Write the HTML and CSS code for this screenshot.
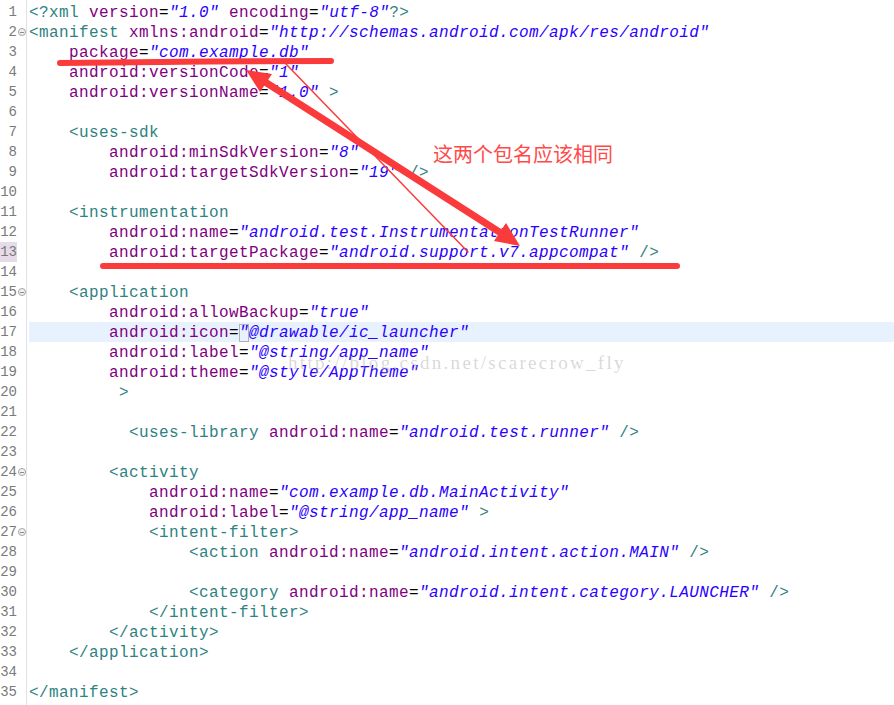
FILE: index.html
```html
<!DOCTYPE html>
<html lang="en">
<head>
    <meta charset="UTF-8">
    <meta name="viewport" content="width=device-width, initial-scale=1.0">
    <title>AndroidManifest.xml</title>
    <link rel="stylesheet" href="styles.css">
</head>
<body>
    <div class="editor">
        <div class="gutter">
            <div class="num">1</div>
            <div class="num fold">2</div>
            <div class="num">3</div>
            <div class="num">4</div>
            <div class="num">5</div>
            <div class="num">6</div>
            <div class="num">7</div>
            <div class="num">8</div>
            <div class="num">9</div>
            <div class="num">10</div>
            <div class="num">11</div>
            <div class="num">12</div>
            <div class="num marked">13</div>
            <div class="num">14</div>
            <div class="num fold">15</div>
            <div class="num">16</div>
            <div class="num">17</div>
            <div class="num">18</div>
            <div class="num">19</div>
            <div class="num">20</div>
            <div class="num">21</div>
            <div class="num">22</div>
            <div class="num">23</div>
            <div class="num fold">24</div>
            <div class="num">25</div>
            <div class="num">26</div>
            <div class="num fold">27</div>
            <div class="num">28</div>
            <div class="num">29</div>
            <div class="num">30</div>
            <div class="num">31</div>
            <div class="num">32</div>
            <div class="num">33</div>
            <div class="num">34</div>
            <div class="num">35</div>
        </div>
        <div class="code">
<div class="ln"><span class="t">&lt;?xml</span> <span class="a">version</span><span class="e">=</span><span class="v">"1.0"</span> <span class="a">encoding</span><span class="e">=</span><span class="v">"utf-8"</span><span class="t">?&gt;</span></div>
<div class="ln"><span class="t">&lt;manifest</span> <span class="a">xmlns:android</span><span class="e">=</span><span class="v">"http://schemas.android.com/apk/res/android"</span></div>
<div class="ln">    <span class="a">package</span><span class="e">=</span><span class="v">"com.example.db"</span></div>
<div class="ln">    <span class="a">android:versionCode</span><span class="e">=</span><span class="v">"1"</span></div>
<div class="ln">    <span class="a">android:versionName</span><span class="e">=</span><span class="v">"1.0"</span> <span class="t">&gt;</span></div>
<div class="ln"> </div>
<div class="ln">    <span class="t">&lt;uses-sdk</span></div>
<div class="ln">        <span class="a">android:minSdkVersion</span><span class="e">=</span><span class="v">"8"</span></div>
<div class="ln">        <span class="a">android:targetSdkVersion</span><span class="e">=</span><span class="v">"19"</span> <span class="t">/&gt;</span></div>
<div class="ln"> </div>
<div class="ln">    <span class="t">&lt;instrumentation</span></div>
<div class="ln">        <span class="a">android:name</span><span class="e">=</span><span class="v">"android.test.InstrumentationTestRunner"</span></div>
<div class="ln">        <span class="a">android:targetPackage</span><span class="e">=</span><span class="v">"android.support.v7.appcompat"</span> <span class="t">/&gt;</span></div>
<div class="ln"> </div>
<div class="ln">    <span class="t">&lt;application</span></div>
<div class="ln">        <span class="a">android:allowBackup</span><span class="e">=</span><span class="v">"true"</span></div>
<div class="ln current">        <span class="a">android:icon</span><span class="e">=</span><span class="v"><span class="match">"</span>@drawable/ic_launcher"</span></div>
<div class="ln">        <span class="a">android:label</span><span class="e">=</span><span class="v">"@string/app_name"</span></div>
<div class="ln">        <span class="a">android:theme</span><span class="e">=</span><span class="v">"@style/AppTheme"</span></div>
<div class="ln">         <span class="t">&gt;</span></div>
<div class="ln"> </div>
<div class="ln">          <span class="t">&lt;uses-library</span> <span class="a">android:name</span><span class="e">=</span><span class="v">"android.test.runner"</span> <span class="t">/&gt;</span></div>
<div class="ln"> </div>
<div class="ln">        <span class="t">&lt;activity</span></div>
<div class="ln">            <span class="a">android:name</span><span class="e">=</span><span class="v">"com.example.db.MainActivity"</span></div>
<div class="ln">            <span class="a">android:label</span><span class="e">=</span><span class="v">"@string/app_name"</span> <span class="t">&gt;</span></div>
<div class="ln">            <span class="t">&lt;intent-filter&gt;</span></div>
<div class="ln">                <span class="t">&lt;action</span> <span class="a">android:name</span><span class="e">=</span><span class="v">"android.intent.action.MAIN"</span> <span class="t">/&gt;</span></div>
<div class="ln"> </div>
<div class="ln">                <span class="t">&lt;category</span> <span class="a">android:name</span><span class="e">=</span><span class="v">"android.intent.category.LAUNCHER"</span> <span class="t">/&gt;</span></div>
<div class="ln">            <span class="t">&lt;/intent-filter&gt;</span></div>
<div class="ln">        <span class="t">&lt;/activity&gt;</span></div>
<div class="ln">    <span class="t">&lt;/application&gt;</span></div>
<div class="ln"> </div>
<div class="ln"><span class="t">&lt;/manifest&gt;</span></div>
        </div>
    </div>

    <div class="watermark">http://blog.csdn.net/scarecrow_fly</div>

    <svg class="marks" width="894" height="705" viewBox="0 0 894 705">
        <g stroke="#fb3b3b" fill="none" stroke-linecap="round">
            <path d="M60 63 Q200 61 331 61" stroke-width="6"/>
            <path d="M103 266 L677 266" stroke-width="6"/>
            <path d="M262 80 L504 235" stroke-width="7"/>
            <path d="M286 64 L468 252" stroke-width="1.5"/>
        </g>
        <g fill="#fb3b3b">
            <polygon points="520,246 494,241 506,223"/>
            <polygon points="246,70 260,92 272,74"/>
        </g>
    </svg>

    <div class="note">这两个包名应该相同</div>
</body>
</html>
```

FILE: styles.css
```css
body {
    margin: 0;
    background: #ffffff;
    width: 894px;
    height: 705px;
    overflow: hidden;
    position: relative;
}

.editor {
    display: flex;
    min-height: 705px;
}

.gutter {
    width: 26px;
    padding-top: 2px;
    border-right: 1px solid #e2e2e2;
    font-family: "Liberation Mono", monospace;
    font-size: 14px;
    color: #7a7a7a;
}

.num {
    height: 20px;
    line-height: 20px;
    width: 17px;
    text-align: right;
    position: relative;
}

.num.marked {
    background: #e7dbea;
}

.num.fold::after {
    content: "";
    position: absolute;
    left: 18px;
    top: 6px;
    width: 6px;
    height: 6px;
    border: 1px solid #a4a4a4;
    border-radius: 50%;
    background: linear-gradient(#8c8c8c, #8c8c8c) center / 4px 1px no-repeat, #f2f2f2;
}

.code {
    flex: 1;
    margin-left: 2px;
    padding-top: 2px;
    font-family: "Liberation Mono", monospace;
    font-size: 16px;
    letter-spacing: 0.4px;
    color: #000000;
}

.ln {
    box-sizing: border-box;
    height: 20px;
    padding-top: 1px;
    line-height: 20px;
    white-space: pre;
}

.ln.current {
    background: #e8f2fe;
}

.t {
    color: #2f8282;
}

.a {
    color: #7f007f;
}

.e {
    color: #000000;
}

.v {
    color: #2a00ff;
    font-style: italic;
}

.match {
    outline: 1px solid #b2b2b2;
    outline-offset: -1px;
}

.watermark {
    position: absolute;
    left: 288px;
    top: 352px;
    font-family: "Liberation Serif", serif;
    font-size: 19px;
    letter-spacing: 2.3px;
    color: rgba(170, 170, 170, 0.45);
    white-space: nowrap;
}

.marks {
    position: absolute;
    left: 0;
    top: 0;
    pointer-events: none;
}

.note {
    position: absolute;
    left: 433px;
    top: 142px;
    font-family: "Noto Sans CJK SC", sans-serif;
    font-size: 20px;
    line-height: 24px;
    color: #ff4a4a;
}
```
